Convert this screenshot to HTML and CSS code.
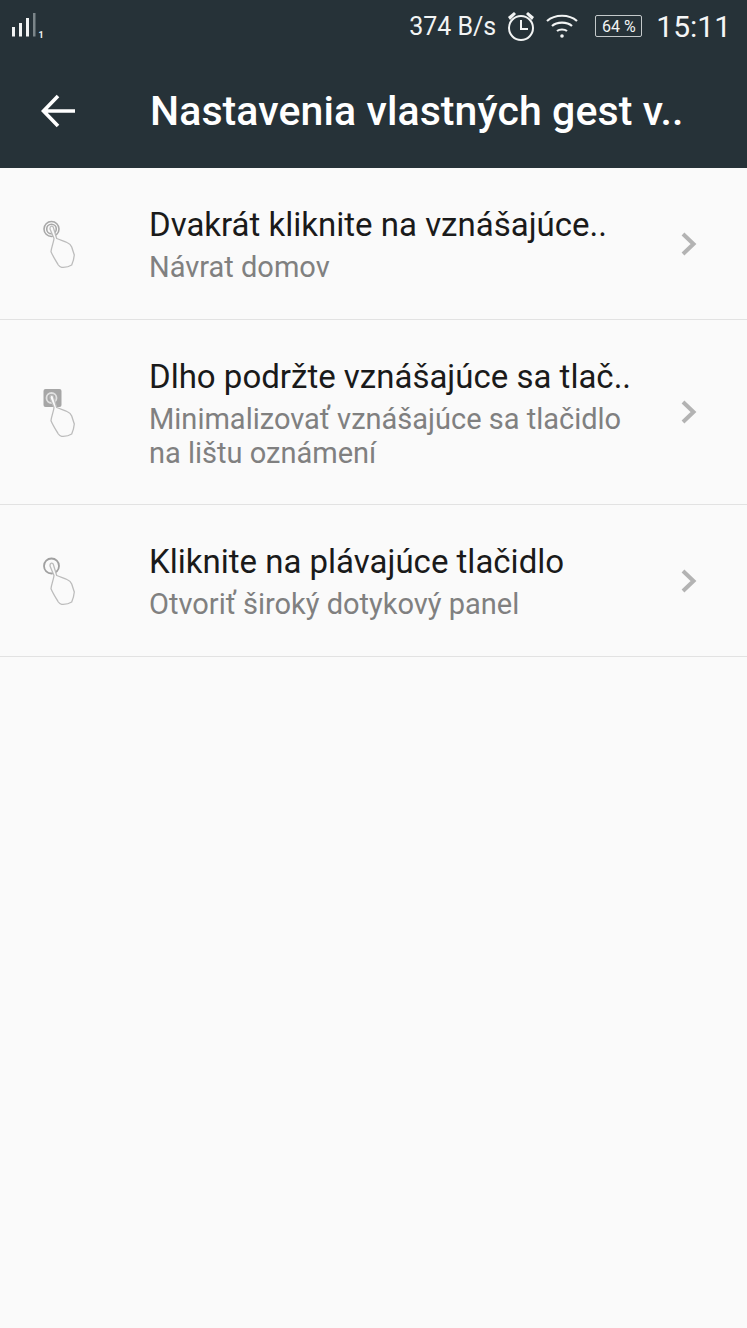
FILE: index.html
```html
<!DOCTYPE html>
<html lang="sk">
<head>
<meta charset="utf-8">
<title>Nastavenia vlastných gest</title>
<link rel="stylesheet" href="styles.css">
</head>
<body>
<svg class="defs" width="0" height="0" aria-hidden="true">
  <defs>
    <symbol id="hand" viewBox="0 0 36 52">
      <path d="M7 9 C6.800 5.500 10 5.200 10.500 8 L13.700 18.500 C17 20 21 21 24 22.500 C26.500 23.500 28 25 28.700 27 L31.300 35 C31 38.500 30 42 28.700 45 C26 46.800 22 47.500 18.700 47.300 C17 47 16 46 15.300 45 C13 41 10 36.500 8 31.700 C8.500 27 10.500 23 11 18.500 Z" fill="#fafafa" stroke="#bcbcbc" stroke-width="1.300" stroke-linejoin="round"/>
    </symbol>
    <symbol id="chev" viewBox="0 0 18 26">
      <path d="M3 3 L13.500 13 L3 23" fill="none" stroke="#b3b3b3" stroke-width="4"/>
    </symbol>
  </defs>
</svg>
<header class="appbar">
  <div class="status">
    <svg class="signal" width="34" height="28" viewBox="0 0 34 28">
      <rect x="0" y="15" width="3" height="9.500" fill="#f2f4f4"/>
      <rect x="7" y="11" width="3" height="13.500" fill="#f2f4f4"/>
      <rect x="14" y="6" width="3" height="18.500" fill="#f2f4f4"/>
      <rect x="21" y="1" width="2.500" height="23.500" fill="#7b8589"/>
      <text x="26.500" y="26" class="sim">1</text>
    </svg>
    <div class="status-right">
      <span class="speed">374 B/s</span>
      <svg class="alarm" width="30" height="32" viewBox="0 0 30 32">
        <circle cx="15" cy="18" r="12" fill="none" stroke="#f2f4f4" stroke-width="2"/>
        <path d="M15 10 V19 H22" fill="none" stroke="#f2f4f4" stroke-width="2"/>
        <path d="M2 7 L8 2 L10 4 L4 10 Z M28 7 L22 2 L20 4 L26 10 Z" fill="#f2f4f4"/>
      </svg>
      <svg class="wifi" width="34" height="26" viewBox="0 0 34 26">
        <path d="M2 8 C10 1 24 1 32 8" fill="none" stroke="#f2f4f4" stroke-width="2.200"/>
        <path d="M7 13 C12 8.500 22 8.500 27 13" fill="none" stroke="#f2f4f4" stroke-width="2.200"/>
        <path d="M12 18 C14.500 16 19.500 16 22 18" fill="none" stroke="#f2f4f4" stroke-width="2.200"/>
        <circle cx="17" cy="23" r="1.800" fill="#f2f4f4"/>
      </svg>
      <span class="battery"><span class="battery-text">64 %</span></span>
      <span class="clock">15:11</span>
    </div>
  </div>
  <div class="toolbar">
    <svg class="back" width="36" height="34" viewBox="0 0 36 34">
      <path d="M34 17 H3 M17 2 L2.500 17 L17 32" fill="none" stroke="#fff" stroke-width="3.600"/>
    </svg>
    <h1 class="title">Nastavenia vlastných gest v..</h1>
  </div>
</header>
<main class="list">
  <div class="row row-short">
    <div class="gesture">
      <svg class="gesture-svg" width="36" height="52" viewBox="0 0 36 52">
        <circle cx="8.500" cy="9" r="7.500" fill="none" stroke="#a8a8a8" stroke-width="1.600"/>
        <circle cx="8.500" cy="9" r="4.800" fill="none" stroke="#a8a8a8" stroke-width="1.600"/>
        <use href="#hand" width="36" height="52"/>
      </svg>
    </div>
    <div class="text">
      <div class="name">Dvakrát kliknite na vznášajúce..</div>
      <div class="sub">Návrat domov</div>
    </div>
    <svg class="chev" width="18" height="26"><use href="#chev"/></svg>
  </div>
  <div class="row row-tall">
    <div class="gesture">
      <svg class="gesture-svg" width="36" height="52" viewBox="0 0 36 52">
        <rect x="0.500" y="0" width="18" height="18" rx="2" fill="#a6a6a6"/>
        <circle cx="8.500" cy="9" r="5" fill="none" stroke="#e0e0e0" stroke-width="1.800"/>
        <use href="#hand" width="36" height="52"/>
      </svg>
    </div>
    <div class="text">
      <div class="name">Dlho podržte vznášajúce sa tlač..</div>
      <div class="sub">Minimalizovať vznášajúce sa tlačidlo<br>na lištu oznámení</div>
    </div>
    <svg class="chev" width="18" height="26"><use href="#chev"/></svg>
  </div>
  <div class="row row-short">
    <div class="gesture">
      <svg class="gesture-svg" width="36" height="52" viewBox="0 0 36 52">
        <circle cx="8.500" cy="9" r="7.500" fill="none" stroke="#a0a0a0" stroke-width="1.800"/>
        <use href="#hand" width="36" height="52"/>
      </svg>
    </div>
    <div class="text">
      <div class="name">Kliknite na plávajúce tlačidlo</div>
      <div class="sub">Otvoriť široký dotykový panel</div>
    </div>
    <svg class="chev" width="18" height="26"><use href="#chev"/></svg>
  </div>
</main>
</body>
</html>
```
FILE: styles.css
```css
* { box-sizing: border-box; }
html, body { margin: 0; padding: 0; }
body {
  width: 747px;
  height: 1328px;
  overflow: hidden;
  background: #fafafa;
  font-family: Roboto, "Liberation Sans", sans-serif;
}
.defs { display: block; height: 0; }
.appbar { height: 168px; background: #263238; color: #fff; }
.status {
  height: 56px;
  display: flex;
  align-items: center;
  justify-content: space-between;
  padding: 0 16px 4px 12px;
}
.sim { font-size: 9px; font-weight: 700; fill: #f2f4f4; font-family: Roboto, sans-serif; }
.status-right { display: flex; align-items: center; }
.speed { font-size: 25px; color: #f2f4f4; margin-right: 10px; }
.alarm { margin-right: 9px; }
.wifi { margin-right: 16px; }
.battery {
  width: 47px;
  height: 22px;
  border: 1px solid #c4c9ca;
  border-radius: 2px;
  display: flex;
  align-items: center;
  justify-content: center;
  margin-right: 14px;
}
.battery-text { font-size: 16px; color: #f2f4f4; }
.clock { font-size: 30px; color: #f5f6f6; }
.toolbar {
  height: 112px;
  display: flex;
  align-items: center;
  padding: 0 0 2px 41px;
}
.back { margin-right: 73px; }
.title {
  margin: 0;
  font-size: 41px;
  font-weight: 500;
  letter-spacing: 0.1px;
  color: #fff;
  white-space: nowrap;
}
.row {
  display: flex;
  align-items: center;
  border-bottom: 1px solid #e2e2e2;
  padding-left: 43px;
  padding-right: 49px;
}
.row-short { height: 152px; }
.row-tall { height: 185px; }
.gesture { width: 106px; flex: none; display: flex; padding-top: 5px; }
.gesture-svg { display: block; }
.text { flex: 1; min-width: 0; padding-top: 2px; }
.name { font-size: 33px; line-height: 40px; color: #1a1a1a; white-space: nowrap; }
.sub { font-size: 29px; line-height: 34px; color: #808080; margin-top: 5px; white-space: nowrap; }
.chev { flex: none; }
```
